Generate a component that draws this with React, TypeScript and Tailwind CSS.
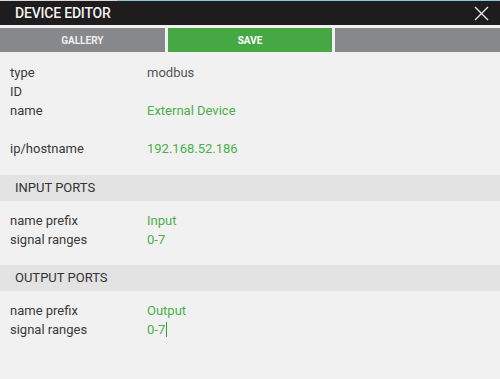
import React from "react";

function Row(props: { label: string; value?: string; green?: boolean; cursor?: boolean }) {
	const { label, value, green, cursor } = props;
	return (
		<div className="flex h-[19px] items-center">
			<span className="w-[137px] text-[#3a3a3a]">{label}</span>
			{value && (
				<span className={green ? "text-[#4bb04b] flex items-center" : "text-[#555555] flex items-center"}>
					{value}
					{cursor && <span className="ml-[1px] inline-block w-[1px] h-[15px] bg-[#2f9e2f]" />}
				</span>
			)}
		</div>
	);
}

function Section(props: { title: string }) {
	return (
		<div className="h-[26px] bg-[#e3e3e3] flex items-center pl-[15px] text-[#333333]">
			{props.title}
		</div>
	);
}

export default function App() {
	return (
		<div
			className="w-[500px] h-[379px] bg-[#f1f1f1] overflow-hidden text-[13px]"
			style={{ fontFamily: "Roboto, 'Liberation Sans', sans-serif" }}
		>
			<div className="flex h-[1px]">
				<div className="w-[117px] bg-[#d9d9d9]" />
				<div className="flex-1 bg-[#8ec9d2]" />
			</div>
			<div className="h-[24px] bg-[#1e1c1c] flex items-center justify-between pl-[15px] pr-[11px]">
				<span className="text-[#f2f2f2] text-[14px] font-medium tracking-[-0.2px]">DEVICE EDITOR</span>
				<svg width="15" height="15" viewBox="0 0 15 15" fill="none" stroke="#e8e8e8" strokeWidth="1.4">
					<path d="M1 1 L14 14 M14 1 L1 14" />
				</svg>
			</div>
			<div className="grid grid-cols-3 gap-[3px] pt-[3px] h-[27px] text-[10px] font-bold text-white">
				<button className="bg-[#87888c] flex items-center justify-center text-[#eeeeee]">GALLERY</button>
				<button className="bg-[#45a845] flex items-center justify-center">SAVE</button>
				<button className="bg-[#87888c]" />
			</div>
			<div className="pt-[11px] pl-[10px]">
				<Row label="type" value="modbus" />
				<Row label="ID" />
				<Row label="name" value="External Device" green />
				<div className="h-[19px]" />
				<Row label="ip/hostname" value="192.168.52.186" green />
			</div>
			<div className="mt-[17px]">
				<Section title="INPUT PORTS" />
			</div>
			<div className="pt-[10px] pl-[10px]">
				<Row label="name prefix" value="Input" green />
				<Row label="signal ranges" value="0-7" green />
			</div>
			<div className="mt-[16px]">
				<Section title="OUTPUT PORTS" />
			</div>
			<div className="pt-[10px] pl-[10px]">
				<Row label="name prefix" value="Output" green />
				<Row label="signal ranges" value="0-7" green cursor />
			</div>
		</div>
	);
}
